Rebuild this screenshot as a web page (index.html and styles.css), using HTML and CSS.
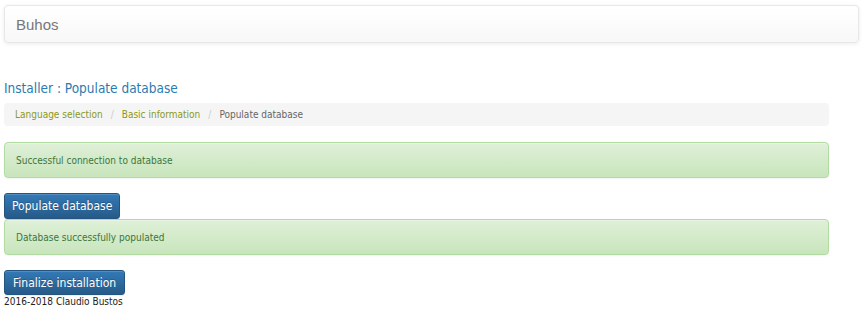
FILE: index.html
```html
<!DOCTYPE html>
<html>
<head>
<meta charset="utf-8">
<link rel="stylesheet" href="styles.css">
</head>
<body>
<nav class="navbar"><span class="brand">Buhos</span></nav>
<main class="content">
  <h1 class="title">Installer : Populate database</h1>
  <ol class="crumbs">
    <li class="crumb-link">Language selection</li>
    <li class="sep">/</li>
    <li class="crumb-link">Basic information</li>
    <li class="sep">/</li>
    <li class="crumb-active">Populate database</li>
  </ol>
  <div class="alert alert-first">Successful connection to database</div>
  <button class="btn btn-first">Populate database</button>
  <div class="alert">Database successfully populated</div>
  <button class="btn btn-second">Finalize installation</button>
  <footer class="footer">2016-2018 Claudio Bustos</footer>
</main>
</body>
</html>
```
FILE: styles.css
```css
html, body {
  margin: 0;
  padding: 0;
  background: #fff;
}
body {
  padding: 5px 4px 0 4px;
  font-family: "DejaVu Sans Condensed", "DejaVu Sans", sans-serif;
  font-size: 10px;
  color: #333;
}
.navbar {
  box-sizing: border-box;
  width: 855px;
  height: 38px;
  border: 1px solid #e7e7e7;
  border-radius: 4px;
  background: linear-gradient(to bottom, #ffffff 0%, #f8f8f8 100%);
  box-shadow: inset 0 1px 0 rgba(255,255,255,.15), 0 1px 4px rgba(0,0,0,.08);
  display: flex;
  align-items: center;
  padding-left: 11px;
}
.brand {
  font-family: "Liberation Sans", Arial, sans-serif;
  font-size: 15px;
  color: #777;
}
.content {
  width: 825px;
  display: flex;
  flex-direction: column;
  align-items: flex-start;
}
.title {
  margin: 37px 0 0 0;
  font-size: 13.5px;
  font-weight: normal;
  color: #2b7bb0;
  line-height: 17px;
  height: 18px;
}
.crumbs {
  box-sizing: border-box;
  align-self: stretch;
  list-style: none;
  margin: 5px 0 0 0;
  padding: 0 11px;
  height: 23px;
  background: #f5f5f5;
  border-radius: 4px;
  display: flex;
  align-items: center;
  gap: 7px;
}
.crumb-link { color: #8b9820; }
.crumb-active { color: #666; }
.sep { color: #ccc; padding: 0 1px; }
.alert {
  box-sizing: border-box;
  align-self: stretch;
  height: 36px;
  border: 1px solid #b2dba1;
  border-radius: 4px;
  background: linear-gradient(to bottom, #dff0d8 0%, #c8e5bc 100%);
  box-shadow: inset 0 1px 0 rgba(255,255,255,.25), 0 1px 2px rgba(0,0,0,.05);
  color: #3c763d;
  display: flex;
  align-items: center;
  padding: 0 11px;
}
.alert-first { margin-top: 16px; }
.btn {
  box-sizing: border-box;
  margin-top: 15px;
  height: 26px;
  padding: 0 8px;
  border: 1px solid #245580;
  border-radius: 3px;
  background: linear-gradient(to bottom, #337ab7 0%, #265a88 100%);
  box-shadow: inset 0 1px 0 rgba(255,255,255,.15), 0 1px 1px rgba(0,0,0,.075);
  color: #fff;
  font-family: "DejaVu Sans Condensed", "DejaVu Sans", sans-serif;
  font-size: 12px;
  text-shadow: 0 -1px 0 rgba(0,0,0,.2);
}
.btn-first { padding: 0 7px; }
.btn-second { height: 25px; }
.footer {
  margin-top: 1px;
  font-size: 10px;
  color: #222;
  line-height: 12px;
}
```
